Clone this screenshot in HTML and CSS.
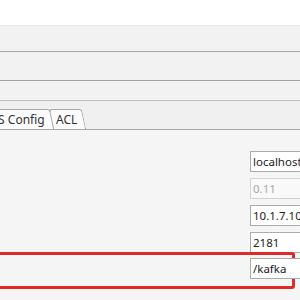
FILE: index.html
```html
<!DOCTYPE html>
<html lang="en">
<head>
    <meta charset="UTF-8">
    <title>Kafka Connection</title>
    <link rel="stylesheet" href="styles.css">
</head>
<body>
    <!-- window header strips -->
    <div class="titlebar"></div>
    <div class="band band-first"></div>
    <div class="band band-second"></div>
    <div class="band band-third"></div>

    <!-- tab strip -->
    <div class="tabbar">
        <div class="tab tab-cut"><span>S Config</span></div>
        <div class="tab tab-acl"><span>ACL</span></div>
    </div>

    <div class="panel">
        <div class="row"><input class="field" type="text" value="localhost"></div>
        <div class="row"><input class="field" type="text" value="0.11" disabled></div>
        <div class="row"><input class="field" type="text" value="10.1.7.102"></div>
        <div class="row"><input class="field" type="text" value="2181"></div>
        <div class="row row-marked"><input class="field" type="text" value="/kafka"></div>
    </div>
</body>
</html>
```

FILE: styles.css
```css
body {
    margin: 0;
    width: 300px;
    height: 300px;
    overflow: hidden;
    background-color: #f5f5f5;
    font-family: "Noto Sans", "Open Sans", sans-serif;
}

.titlebar {
    height: 25px;
    background-color: #fff;
}

.band {
    background-color: #f2f2f2;
    border-top: 1px solid #e8e8e8;
}

.band-first {
    height: 25px;
    border-bottom: 1px solid #a4a4a4;
    box-shadow: 0 1px 0 #d6d6d6;
}

.band-second {
    height: 27px;
    border-top-color: #f2f2f2;
    border-bottom: 1px solid #a4a4a4;
    box-shadow: 0 1px 0 #d6d6d6;
}

.band-third {
    height: 18px;
    border-top-color: #f2f2f2;
    border-bottom: 1px solid #bdbdbd;
}

.tabbar {
    display: flex;
    align-items: flex-end;
    height: 28px;
    overflow: hidden;
    background-color: #f0f0f0;
    border-bottom: 1px solid #a6a6a6;
}

.tab {
    flex-shrink: 0;
    height: 19px;
    border: 1px solid #a8a8a8;
    border-bottom: none;
    border-radius: 3px 3px 0 0;
    background-color: #fbfbfb;
    transform: skewX(12deg);
    display: flex;
    align-items: center;
}

.tab span {
    display: inline-block;
    transform: skewX(-12deg);
    font-size: 12px;
    color: #333;
    white-space: nowrap;
}

.tab-cut {
    margin-left: -8px;
    width: 58px;
}

.tab-cut span {
    padding-left: 5px;
}

.tab-acl {
    margin-left: -1px;
    width: 31px;
}

.tab-acl span {
    padding-left: 4px;
}

.panel {
    display: flex;
    flex-direction: column;
    gap: 6px;
    padding-top: 19px;
    overflow: hidden;
}

.row {
    flex-shrink: 0;
    padding-left: 250px;
    height: 21px;
}

.field {
    box-sizing: border-box;
    width: 70px;
    height: 21px;
    margin: 0;
    padding: 0 2px;
    border: 1px solid #ababab;
    background-color: #fff;
    font-family: "Noto Sans", "Open Sans", sans-serif;
    font-size: 11.5px;
    color: #222;
    outline: none;
}

.field:disabled {
    color: #a8a8a8;
    border-color: #d2d2d2;
    background-color: #f9f9f9;
}

.row-marked {
    margin-top: -5px;
    margin-left: -10px;
    width: 305px;
    box-sizing: border-box;
    height: 37px;
    padding: 1px 0 0 257px;
    border: 3px solid #df2a2c;
    border-radius: 3px;
}
```
